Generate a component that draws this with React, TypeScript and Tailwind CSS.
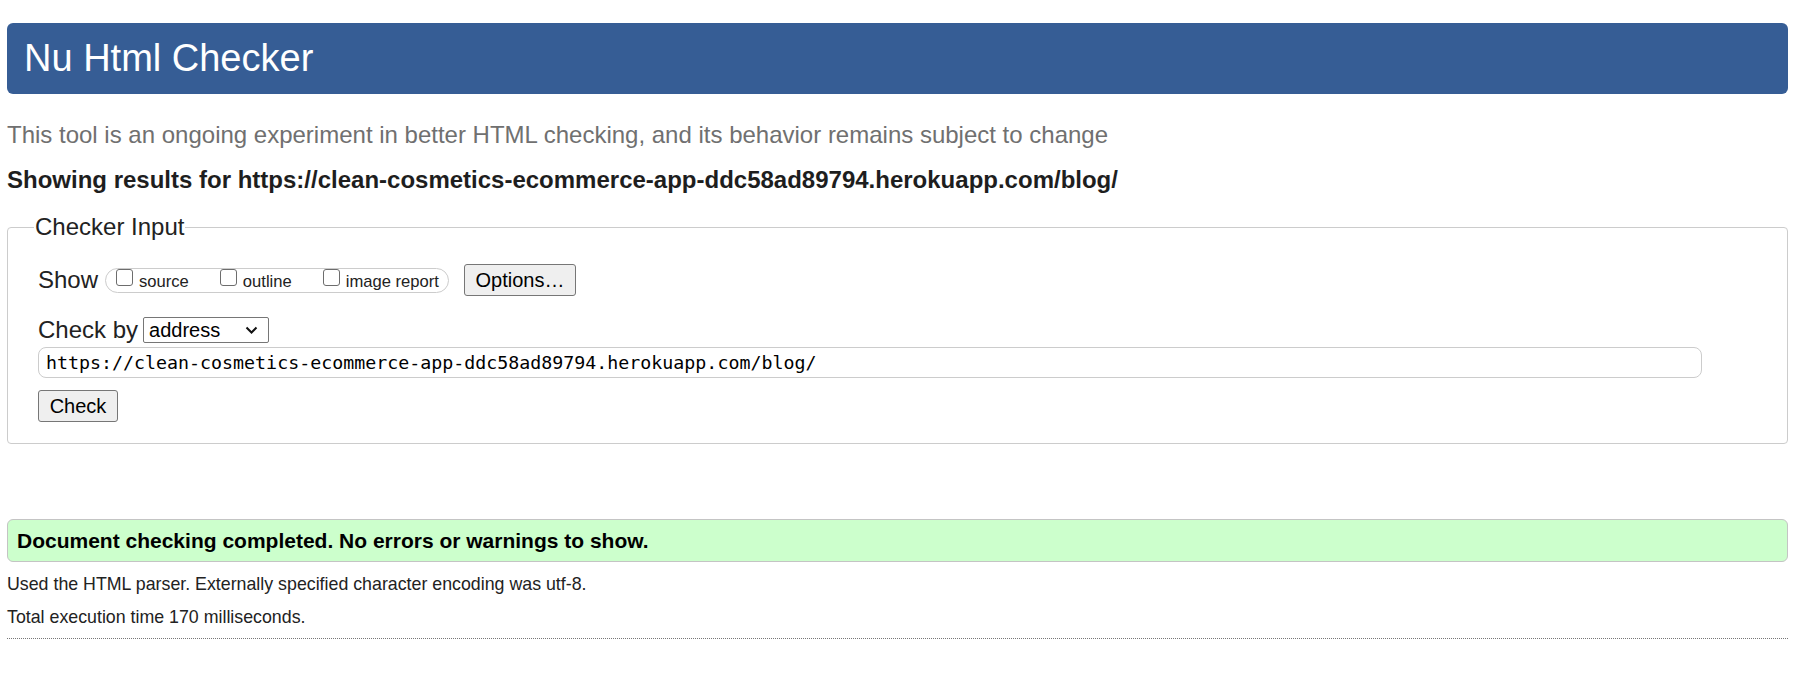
import { useState } from "react";

function Box({ label }: { label: string }) {
  const [on, setOn] = useState(false);
  return (
    <label className="flex items-center gap-[6px] cursor-pointer" onClick={() => setOn(!on)}>
      <span
        className={
          "mb-[6px] block h-[17px] w-[17px] rounded-[3px] border border-[#6d6d6d] " +
          (on ? "bg-[#0075ff]" : "bg-white")
        }
      />
      <span className="mt-[4px] text-[16.6px] leading-[20px] text-[#222]">{label}</span>
    </label>
  );
}

export default function App() {
  const [url, setUrl] = useState(
    "https://clean-cosmetics-ecommerce-app-ddc58ad89794.herokuapp.com/blog/"
  );

  return (
    <div className="min-h-screen bg-white font-['Liberation_Sans',Arial,sans-serif] text-[#222]">
      <div className="ml-[7px] w-[1781px] pt-[23px]">
        <h1 className="flex h-[71px] items-center rounded-[6px] bg-[#365d95] pl-[17px] text-[38px] text-white">
          Nu Html Checker
        </h1>

        <p className="mt-[27px] text-[24px] leading-[28px] text-[#707070]">
          This tool is an ongoing experiment in better HTML checking, and its behavior remains subject to change
        </p>
        <p className="mt-[17px] text-[24px] font-bold leading-[28px] text-[#1e1e1e]">
          Showing results for https://clean-cosmetics-ecommerce-app-ddc58ad89794.herokuapp.com/blog/
        </p>

        <fieldset className="mt-[19px] rounded-[4px] border border-[#cccccc] px-[30px] pb-[21px]">
          <legend className="ml-[-4px] px-[1px] text-[24px] leading-[28px] text-[#222]">Checker Input</legend>

          <div className="mt-[23px] flex h-[32px] items-center">
            <span className="text-[24px] leading-[28px]">Show</span>
            <div className="ml-[7px] flex h-[25px] items-center gap-[31px] rounded-full border border-[#cccccc] pl-[10px] pr-[9px]">
              <Box label="source" />
              <Box label="outline" />
              <Box label="image report" />
            </div>
            <button className="ml-[15px] h-[32px] w-[112px] rounded-[3px] border border-[#767676] bg-[#efefef] text-[20px] text-black">
              Options…
            </button>
          </div>

          <div className="mt-[21px] flex h-[26px] items-center">
            <span className="text-[24px] leading-[28px]">Check by</span>
            <div className="ml-[5px] flex h-[26px] w-[126px] items-center justify-between rounded-[2px] border border-[#767676] pl-[5px] pr-[10px]">
              <span className="text-[20px] leading-[24px] text-black">address</span>
              <svg width="13" height="8" viewBox="0 0 13 8" fill="none">
                <path d="M1.5 1.5 L6.5 6.5 L11.5 1.5" stroke="#111" strokeWidth="2" />
              </svg>
            </div>
          </div>

          <input
            value={url}
            onChange={(e) => setUrl(e.target.value)}
            className="mt-[4px] block h-[31px] w-[1664px] rounded-[8px] border border-[#cccccc] pl-[7px] font-['DejaVu_Sans_Mono',monospace] text-[18.3px] text-black outline-none"
          />

          <button className="mt-[12px] block h-[32px] w-[80px] rounded-[3px] border border-[#767676] bg-[#efefef] text-[20px] text-black">
            Check
          </button>
        </fieldset>

        <div className="mt-[75px] flex h-[43px] items-center rounded-[6px] border border-[#c4c4c4] bg-[#ccffcc] pl-[9px]">
          <span className="text-[21px] font-bold text-black">
            Document checking completed. No errors or warnings to show.
          </span>
        </div>

        <p className="mt-[12px] text-[17.8px] leading-[20px] text-[#222]">
          Used the HTML parser. Externally specified character encoding was utf-8.
        </p>
        <p className="mt-[13px] text-[17.8px] leading-[20px] text-[#222]">Total execution time 170 milliseconds.</p>

        <div className="mt-[11px] border-t border-dotted border-[#777]" />
      </div>
    </div>
  );
}
